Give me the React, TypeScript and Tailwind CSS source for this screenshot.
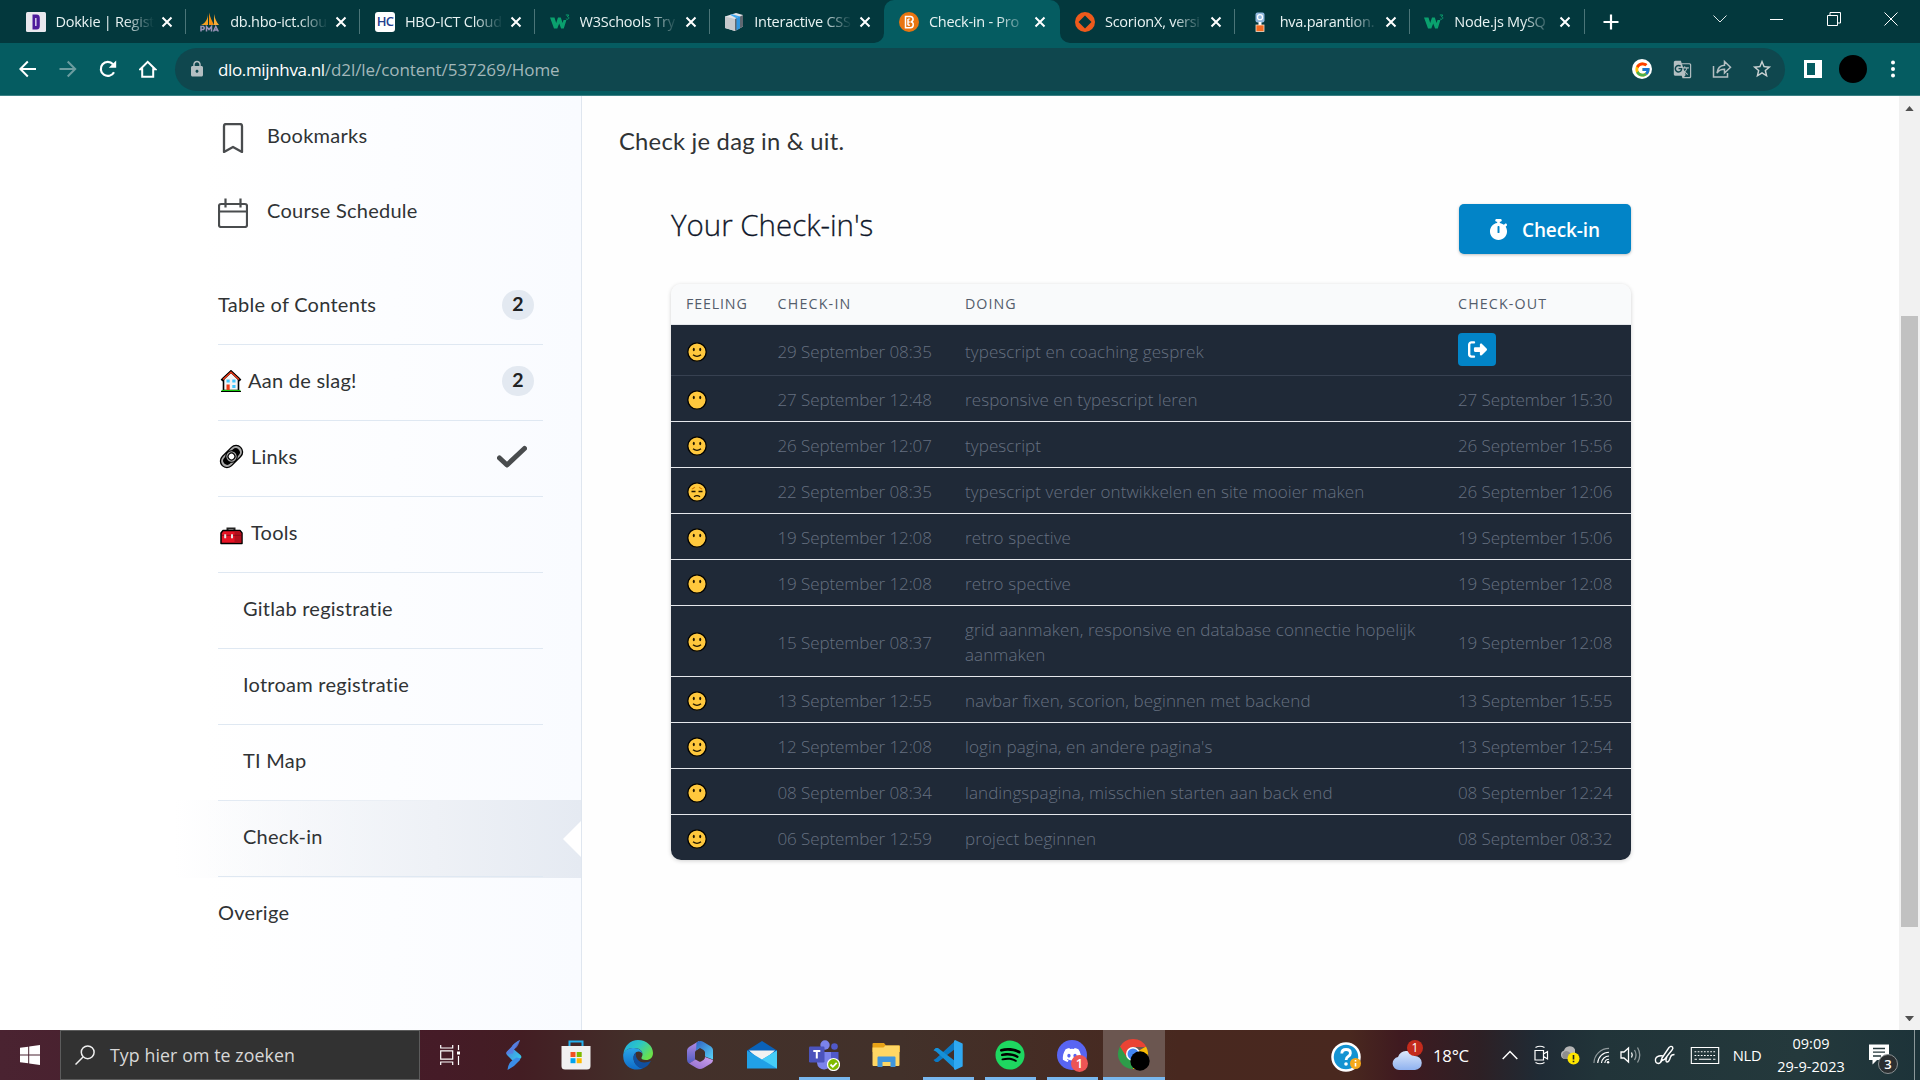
import type { ReactNode } from "react";
import { FaDiscord, FaSpotify } from "react-icons/fa";
import { FaRightFromBracket, FaStopwatch } from "react-icons/fa6";
import { FcGoogle } from "react-icons/fc";
import { MdGTranslate, MdLock, MdStarOutline } from "react-icons/md";

/* ---------- favicons ---------- */

const W3Icon = () => (
  <svg viewBox="0 0 20 20" className="size-5">
    <path d="M0 5.500h4.500l1.700 5.600 1.800-5.600h2.800l1.800 5.600 0.900-3.200h2.900L13.800 16.500h-2.700L9.200 11.500 7.300 16.500H4z" fill="#0aa06e" />
    <path d="M15.800 3h3l-1.400 1.700c1.300.1 1.700 1 1.300 1.800-.5 1-2.100 1-2.800.2" fill="none" stroke="#0aa06e" strokeWidth="1" />
  </svg>
);

const DokkieIcon = () => (
  <svg viewBox="0 0 20 20" className="size-5">
    <rect width="20" height="20" rx="1.500" fill="#e9e8ee" />
    <path d="M6.500 2.500h4c2.600 0 3.300 1.500 3.300 4v7c0 2.500-.7 4-3.300 4h-4z" fill="#4d1b9b" />
    <path d="M9.800 6v8" stroke="#cfc3e6" strokeWidth="1.600" />
  </svg>
);

const PmaIcon = () => (
  <svg viewBox="0 0 20 20" className="size-5">
    <path d="M8 1.500C8 7 5.500 11 1 13h7z" fill="#f5a01f" />
    <path d="M9 0.500v12.500h5C12 9 10 5 9 0.500z" fill="#f28c0f" />
    <path d="M14 2v11h5c-2.500-3-4-6-5-11z" fill="#f7ab35" />
    <path d="M1 19.500v-5h2.500q1.500 1.500 0 3H1M6.500 19.500v-5l2.500 3 2.500-3v5M13.500 19.500l2.300-5 2.500 5M14.500 18h3" fill="none" stroke="#9a93b8" strokeWidth="1.500" />
  </svg>
);

const HcIcon = () => (
  <span className="flex size-5 items-center justify-center rounded-[3px] bg-white text-[13px] font-semibold tracking-[-1px] text-[#25408f]">
    HC
  </span>
);

const CubeIcon = () => (
  <svg viewBox="0 0 20 20" className="size-5">
    <path d="M1 4.500 12 1l7 2v11.500L11 19 1 16z" fill="#e3e5e8" />
    <path d="M1 4.500 11 7v12L1 16z" fill="#c6c9cd" />
    <path d="M11 7l8-4v11.500L11 19z" fill="#5f6770" />
    <path d="M12.500 6.200 16 4.500v11.700l-3.500 2z" fill="#2f95e0" />
    <path d="M6 2.800 8 2.200l8 2.300-3.500 1.700z" fill="#3fa9f0" />
  </svg>
);

const BrightspaceIcon = () => (
  <svg viewBox="0 0 20 20" className="size-5">
    <circle cx="10" cy="10" r="10" fill="#e87511" />
    <path d="M6.500 4.500h4.500a2.700 2.700 0 0 1 1 5.300 3 3 0 0 1-.7 5.900H6.500zM9 7v6.300" fill="none" stroke="#fff" strokeWidth="1.500" />
    <path d="M9 7h2M9 10h2.500M9 13.200h2" stroke="#fff" strokeWidth="1.200" />
  </svg>
);

const ScorionIcon = () => (
  <svg viewBox="0 0 20 20" className="size-5">
    <circle cx="10" cy="10" r="10" fill="#ee5a1c" />
    <path d="M10 3.500 16.500 10 10 16.500 3.500 10z" fill="#03383d" />
  </svg>
);

const ParantionIcon = () => (
  <svg viewBox="0 0 20 20" className="size-5">
    <rect x="5.500" y="0.500" width="9" height="10" rx="2" fill="#8fb7de" />
    <circle cx="10" cy="5.200" r="2.500" fill="none" stroke="#fff" strokeWidth="1.300" />
    <path d="M10 10v3" stroke="#fff" strokeWidth="3" />
    <rect x="6" y="13" width="8" height="6.500" fill="#f26a21" stroke="#f8dcc8" strokeWidth=".8" />
  </svg>
);

/* ---------- browser chrome ---------- */

type TabData = { title: string; icon: ReactNode; active?: boolean; divider?: boolean };

const tabs: TabData[] = [
  { title: "Dokkie | Regist", icon: <DokkieIcon />, divider: true },
  { title: "db.hbo-ict.clou", icon: <PmaIcon />, divider: true },
  { title: "HBO-ICT Cloud", icon: <HcIcon />, divider: true },
  { title: "W3Schools Try", icon: <W3Icon />, divider: true },
  { title: "Interactive CSS", icon: <CubeIcon /> },
  { title: "Check-in - Pro", icon: <BrightspaceIcon />, active: true },
  { title: "ScorionX, versi", icon: <ScorionIcon />, divider: true },
  { title: "hva.parantion.", icon: <ParantionIcon />, divider: true },
  { title: "Node.js MySQ", icon: <W3Icon />, divider: true },
];

const Tab = ({ title, icon, active, divider }: TabData) => (
  <div
    className={
      "relative flex h-[43px] shrink-0 items-center pl-[14.500px] " +
      (active ? "w-[176px] rounded-t-[10px] bg-[#055c61]" : "w-[174.700px]")
    }
  >
    {active && (
      <>
        <svg viewBox="0 0 10 10" className="absolute bottom-0 -left-2.5 size-2.5">
          <path d="M10 0v10H0A10 10 0 0 0 10 0z" fill="#055c61" />
        </svg>
        <svg viewBox="0 0 10 10" className="absolute -right-2.5 bottom-0 size-2.5">
          <path d="M0 0v10h10A10 10 0 0 1 0 0z" fill="#055c61" />
        </svg>
      </>
    )}
    {icon}
    <span className="ml-[10px] w-[98px] [mask-image:linear-gradient(to_right,black_70%,transparent)] text-[14.500px] tracking-[-0.250px] whitespace-nowrap text-[#e9f3f3]">
      {title}
    </span>
    <svg viewBox="0 0 10 10" className="ml-[8px] size-[10px] overflow-visible">
      <path d="M0.500 0.500l9 9M9.500 0.500l-9 9" stroke="#fff" strokeWidth="2" />
    </svg>
    {divider && <span className="ml-auto h-[25px] w-px bg-[#4b7578]" />}
  </div>
);

const TabStrip = () => (
  <div className="flex h-[43px] bg-[#03383d] pl-[11px]">
    {tabs.map((t) => (
      <Tab key={t.title} {...t} />
    ))}
    <div className="flex w-[53px] items-center justify-center">
      <svg viewBox="0 0 16 16" className="size-4">
        <path d="M8 0.500v15M0.500 8h15" stroke="#fff" strokeWidth="2.200" />
      </svg>
    </div>
    <div className="ml-auto flex h-[38px] items-center">
      <div className="flex w-[57px] justify-center">
        <svg viewBox="0 0 14 8" className="w-3.5">
          <path d="M0.500 0.500 7 7l6.500-6.500" fill="none" stroke="#dfe8e8" />
        </svg>
      </div>
      <div className="flex w-[57px] justify-center">
        <span className="h-px w-[13px] bg-white" />
      </div>
      <div className="flex w-[57px] justify-center">
        <svg viewBox="0 0 14 14" className="size-3.5">
          <path d="M0.500 3.500h10v10h-10zM3 3.500v-3h10.500v10.500H10.500" fill="none" stroke="#fff" />
        </svg>
      </div>
      <div className="flex w-[58px] justify-center">
        <svg viewBox="0 0 14 14" className="size-3.5">
          <path d="M0.500 0.500l13 13M13.500 0.500l-13 13" stroke="#fff" />
        </svg>
      </div>
    </div>
  </div>
);

const NavButton = ({ children }: { children: ReactNode }) => (
  <div className="flex w-10 justify-center">{children}</div>
);

const Toolbar = () => (
  <div className="flex h-[53px] items-center border-b border-[#3a8084] bg-[#055c61] pl-2">
    <NavButton>
      <svg viewBox="0 0 18 18" className="size-[18px]" fill="none" stroke="#fff" strokeWidth="2">
        <path d="M17 9H1.500M8.800 1.500 1.300 9l7.500 7.500" />
      </svg>
    </NavButton>
    <NavButton>
      <svg viewBox="0 0 18 18" className="size-[18px]" fill="none" stroke="#6c9da0" strokeWidth="2">
        <path d="M0.500 9H16M8.700 1.500 16.200 9l-7.500 7.500" />
      </svg>
    </NavButton>
    <NavButton>
      <svg viewBox="0 0 18 18" className="size-[18px]">
        <path d="M15 12.200A7 7 0 1 1 14 4.200" fill="none" stroke="#fff" strokeWidth="2.200" />
        <path d="M17.200 0.500v7.300H9.800z" fill="#fff" />
      </svg>
    </NavButton>
    <NavButton>
      <svg viewBox="0 0 18 18" className="size-[18px]">
        <path d="M1.300 9.200 8.700 1.800l7.500 7.400h-2v7.600h-11V9.200z" fill="none" stroke="#fff" strokeWidth="2" />
      </svg>
    </NavButton>
    <div className="ml-[7px] flex h-[43px] w-[1610px] items-center rounded-full bg-[#0f474e] pl-[13px]">
      <MdLock className="size-[18px] text-[#b4bfc2]" />
      <div className="mt-0.5 ml-[12px] text-[17px] whitespace-nowrap text-[#a3b7ba]">
        <span className="tracking-[-0.350px] text-white">dlo.mijnhva.nl</span>
        <span className="tracking-[-0.070px]">/d2l/le/content/537269/Home</span>
      </div>
      <div className="ml-auto flex items-center pr-[3px]">
        <NavButton>
          <span className="flex size-5 items-center justify-center rounded-full bg-white">
            <FcGoogle className="size-[17px]" />
          </span>
        </NavButton>
        <NavButton>
          <MdGTranslate className="size-[19px] text-[#b4bfc2]" />
        </NavButton>
        <NavButton>
          <svg viewBox="0 0 20 20" className="size-5" fill="none" stroke="#b4bfc2" strokeWidth="1.500">
            <path d="M1.500 7v11h14v-4M12.500 2.500v3.700C7.500 6.500 5.500 9.500 5 14c2-3 4.500-3.800 7.500-3.700V14l6-5.800z" />
          </svg>
        </NavButton>
        <NavButton>
          <MdStarOutline className="size-[22px] text-[#c9d1d2]" />
        </NavButton>
      </div>
    </div>
    <div className="ml-[8px] flex items-center">
      <NavButton>
        <span className="flex h-[18px] w-[18px] border-[3px] border-r-[7px] border-white" />
      </NavButton>
      <NavButton>
        <span className="size-[28px] rounded-full bg-black" />
      </NavButton>
      <NavButton>
        <svg viewBox="0 0 4 18" className="h-[18px]" fill="#fff">
          <circle cx="2" cy="2.500" r="2" />
          <circle cx="2" cy="9" r="2" />
          <circle cx="2" cy="15.500" r="2" />
        </svg>
      </NavButton>
    </div>
  </div>
);

/* ---------- sidebar ---------- */

const HouseIcon = () => (
  <svg viewBox="0 0 22 22" className="size-[22px]">
    <path d="M3.500 8v12.500h15V8L11 1.500z" fill="#f4f4f4" stroke="#000" strokeWidth="1.600" />
    <path d="M1.500 10.500 11 1.500l9.500 9" fill="none" stroke="#000" strokeWidth="2.500" />
    <path d="M3 9.500 11 2.200l8 7.300" fill="none" stroke="#f03a17" strokeWidth="1.500" />
    <path d="M6.500 9.500h3.200v3H6.500zM12.300 9.500h3.200v3h-3.200zM12.300 15h3.200v3h-3.200z" fill="#3fc8ff" />
    <path d="M6.500 14.500h3.200V20H6.500z" fill="#f03a17" />
    <path d="M1.500 20.500h19" stroke="#16c60c" strokeWidth="1.200" />
    <path d="M1 21.500h20" stroke="#000" strokeWidth="1" />
  </svg>
);

const LinkIcon = () => (
  <svg viewBox="0 0 24 24" className="size-[23px] overflow-visible" fill="none">
    <g transform="rotate(-45 12 12)">
      <rect x="-1.500" y="5.200" width="27" height="13.600" rx="6.800" fill="#a9a9a9" stroke="#000" strokeWidth="1.400" />
      <rect x="1.500" y="7.700" width="21" height="8.600" rx="4.300" fill="#000" />
      <rect x="6" y="6" width="12" height="12" rx="6" fill="#a9a9a9" stroke="#000" strokeWidth="1.200" />
      <circle cx="12" cy="12" r="3.500" fill="#fff" stroke="#000" strokeWidth="1.300" />
    </g>
  </svg>
);

const ToolboxIcon = () => (
  <svg viewBox="0 0 23 18" className="h-[18px] w-[23px]">
    <path d="M7.500 4V1.500h7V4" fill="none" stroke="#222" strokeWidth="2" />
    <path d="M1 6 3 3.500h17L22 6v10.500H1z" fill="#e81224" stroke="#000" strokeWidth="1.500" strokeLinejoin="round" />
    <path d="M14.500 4.500H20l1.300 2v9.300h-6.800z" fill="#b40f1c" />
    <path d="M2 8.300h19" stroke="#7d0a14" strokeWidth=".8" />
    <path d="M4.200 7.300h2v4h-2zM11 7.300h2v4h-2z" fill="#e6e6e6" />
  </svg>
);

const Badge = () => (
  <span className="mr-[9px] ml-auto flex h-[30px] w-8 items-center justify-center rounded-full bg-[#e3e9f1] pb-0.5 text-[19.500px] font-bold text-[#202122]">
    2
  </span>
);

const CheckMark = () => (
  <svg viewBox="0 0 30 24" className="mr-4 ml-auto h-6 w-[30px]">
    <path d="M2.500 13 10 20 27.500 3.500" fill="none" stroke="#494c4e" strokeWidth="5" strokeLinecap="round" strokeLinejoin="round" />
  </svg>
);

type SideRow = { label: string; icon?: ReactNode; end?: ReactNode; nested?: boolean; selected?: boolean; last?: boolean };

const sideRows: SideRow[] = [
  { label: "Table of Contents", end: <Badge /> },
  { label: "Aan de slag!", icon: <span className="mr-[6px] ml-[2px]"><HouseIcon /></span>, end: <Badge /> },
  { label: "Links", icon: <span className="mr-[8px] ml-[2px]"><LinkIcon /></span>, end: <CheckMark /> },
  { label: "Tools", icon: <span className="mt-[6px] mr-[8px] ml-[2px]"><ToolboxIcon /></span> },
  { label: "Gitlab registratie", nested: true },
  { label: "Iotroam registratie", nested: true },
  { label: "TI Map", nested: true },
  { label: "Check-in", nested: true, selected: true },
  { label: "Overige", last: true },
];

const Sidebar = () => (
  <aside className="w-[582px] shrink-0 overflow-hidden border-r border-[#dfe6ef] bg-linear-to-r from-white from-35% to-[#f9fbff] text-[20px] tracking-[0.250px] text-[#303335]">
    <div className="flex h-[75px] items-center pt-[9px] pl-[218px]">
      <svg viewBox="0 0 30 30" className="size-[30px]">
        <path d="M8 1h14a2 2 0 0 1 2 2v26l-9-5-9 5V3a2 2 0 0 1 2-2z" fill="none" stroke="#494c4e" strokeWidth="2.300" strokeLinejoin="round" />
      </svg>
      <span className="-mt-[7px] ml-[19px]">Bookmarks</span>
    </div>
    <div className="flex h-[75px] items-center pt-[9px] pl-[218px]">
      <svg viewBox="0 0 30 30" className="size-[30px]" fill="none" stroke="#494c4e" strokeWidth="2.200">
        <rect x="1" y="6" width="28" height="23" rx="2" />
        <path d="M1 13.500h28M7.500 0.500v9M22.500 0.500v9" />
      </svg>
      <span className="-mt-[7px] ml-[19px]">Course Schedule</span>
    </div>
    <div className="mt-[23px]">
      {sideRows.map((r) => (
        <div
          key={r.label}
          className={
            "relative flex pl-[218px] " +
            (r.selected
              ? "-mt-px -mb-px h-[78px] bg-linear-to-r from-transparent from-30% via-[#eef1f6] via-75% to-[#e5eaf2] pt-px pb-px"
              : "h-[76px]")
          }
        >
          <div
            className={
              "flex w-[325px] items-center " +
              (r.last ? "pb-[6px] " : "border-b border-[#dfe8f2] pb-[4px] ") +
              (r.nested ? "pl-[25px]" : "")
            }
          >
            {r.icon}
            <span className="-mt-px">{r.label}</span>
            {r.end}
          </div>
          {r.selected && (
            <svg viewBox="0 0 18 36" className="absolute top-[21px] right-0 h-9 w-[18px]">
              <path d="M18 0v36L0 18z" fill="#fff" />
            </svg>
          )}
        </div>
      ))}
    </div>
  </aside>
);

/* ---------- check-in table ---------- */

type Mood = "smile" | "neutral" | "sad";

const Face = ({ mood }: { mood: Mood }) => (
  <svg viewBox="0 0 20 20" className="ml-px size-5">
    <circle cx="10" cy="10" r="9.200" fill="#ffc83d" stroke="#000" strokeWidth="1.300" />
    {mood === "sad" ? (
      <>
        <path d="M4.500 9.500h4M11.500 9.500h4" stroke="#1f1500" strokeWidth="1.300" />
        <path d="M4.800 7q2-.5 3-2M15.200 7q-2-.5-3-2" fill="none" stroke="#d67d00" strokeWidth="1.200" />
        <path d="M7 14.800q3-2.300 6 0" fill="none" stroke="#1f1500" strokeWidth="1.300" />
      </>
    ) : (
      <>
        <ellipse cx="6.800" cy="7.500" rx="1" ry="1.700" fill="#1f1500" />
        <ellipse cx="13.200" cy="7.500" rx="1" ry="1.700" fill="#1f1500" />
      </>
    )}
    {mood === "smile" && <path d="M6 12.700q4 3.300 8 0" fill="none" stroke="#1f1500" strokeWidth="1.400" />}
  </svg>
);

type Entry = { mood: Mood; start: string; doing: string; end?: string; tall?: boolean };

const entries: Entry[] = [
  { mood: "smile", start: "29 September 08:35", doing: "typescript en coaching gesprek" },
  { mood: "neutral", start: "27 September 12:48", doing: "responsive en typescript leren", end: "27 September 15:30" },
  { mood: "smile", start: "26 September 12:07", doing: "typescript", end: "26 September 15:56" },
  { mood: "sad", start: "22 September 08:35", doing: "typescript verder ontwikkelen en site mooier maken", end: "26 September 12:06" },
  { mood: "neutral", start: "19 September 12:08", doing: "retro spective", end: "19 September 15:06" },
  { mood: "neutral", start: "19 September 12:08", doing: "retro spective", end: "19 September 12:08" },
  { mood: "smile", start: "15 September 08:37", doing: "grid aanmaken, responsive en database connectie hopelijk aanmaken", end: "19 September 12:08", tall: true },
  { mood: "smile", start: "13 September 12:55", doing: "navbar fixen, scorion, beginnen met backend", end: "13 September 15:55" },
  { mood: "smile", start: "12 September 12:08", doing: "login pagina, en andere pagina's", end: "13 September 12:54" },
  { mood: "neutral", start: "08 September 08:34", doing: "landingspagina, misschien starten aan back end", end: "08 September 12:24" },
  { mood: "smile", start: "06 September 12:59", doing: "project beginnen", end: "08 September 08:32" },
];

const rowLook = (i: number, e: Entry) => {
  if (i === 0) return "h-[51px] border-b border-[#374151] pt-[3px]";
  if (i === entries.length - 1) return "h-[45px] pt-[2px]";
  if (e.tall) return "h-[71px] border-b border-[#e5e7eb] pt-[2px]";
  return "h-[46px] border-b border-[#e5e7eb] pt-[2px]";
};

const CheckInTable = () => (
  <div className="mt-[30px] w-[960px] overflow-hidden rounded-[10px] font-['Open_Sans',sans-serif] shadow-[0_1px_4px_rgba(0,0,0,0.18)]">
    <div className="grid h-[41px] grid-cols-[91.500px_187.500px_493px_1fr] items-center border-b border-[#e5e7eb] bg-[#f9fafb] pl-[15px] text-[14.250px] text-[#545d6b]">
      <span className="tracking-[0.850px]">FEELING</span>
      <span className="tracking-[1.200px]">CHECK-IN</span>
      <span className="tracking-[1.000px]">DOING</span>
      <span className="tracking-[1.150px]">CHECK-OUT</span>
    </div>
    <div className="bg-[#1f2937] text-[17px] leading-[25px] font-light text-[#667080]">
      {entries.map((e, i) => (
        <div key={i} className={"grid grid-cols-[91.500px_187.500px_493px_1fr] items-center pl-[15px] " + rowLook(i, e)}>
          <Face mood={e.mood} />
          <span className="tracking-[-0.090px]">{e.start}</span>
          <span className="w-[462px] tracking-[0.090px]">{e.doing}</span>
          {e.end ? (
            <span className="tracking-[-0.090px]">{e.end}</span>
          ) : (
            <span className="-mt-[5px] flex h-[33px] w-[38px] items-center justify-center rounded-[4px] bg-[#0284c7]">
              <FaRightFromBracket className="size-[19px] text-white" />
            </span>
          )}
        </div>
      ))}
    </div>
  </div>
);

const Content = () => (
  <main className="flex-1 bg-[#fefefe] pl-[37px]">
    <div className="pt-[28px] text-[23.750px] leading-[34px] tracking-[0.240px] text-[#303335]">Check je dag in &amp; uit.</div>
    <div className="mt-[46px] ml-[52px] flex w-[960px] items-start font-['Open_Sans',sans-serif]">
      <h1 className="mt-[3px] text-[29.500px] leading-[36px] font-light tracking-[-0.020px] text-[#0f172a] [-webkit-text-stroke:0.3px_#0f172a]">
        Your Check-in's
      </h1>
      <button className="ml-auto flex h-[50px] w-[172px] items-center rounded-[5px] bg-[#0284c7] pl-[29px] shadow-[0_1px_3px_rgba(0,0,0,0.25)]">
        <FaStopwatch className="size-[21px] text-white" />
        <span className="ml-[13px] pt-[2px] text-[19px] font-semibold tracking-[-0.120px] text-white">Check-in</span>
      </button>
    </div>
    <div className="ml-[52px]">
      <CheckInTable />
    </div>
  </main>
);

const Scrollbar = () => (
  <div className="flex w-[21px] shrink-0 flex-col items-center justify-between bg-[#f1f1f1] py-[9px]">
    <svg viewBox="0 0 10 6" className="mt-[1px] w-[9px]">
      <path d="M0 6 5 0l5 6z" fill="#505050" />
    </svg>
    <div className="mt-[205px] mb-auto h-[611px] w-[17px] bg-[#c1c1c1]" />
    <svg viewBox="0 0 10 6" className="w-[9px]">
      <path d="M0 0l5 6 5-6z" fill="#505050" />
    </svg>
  </div>
);

/* ---------- taskbar ---------- */

const TaskViewIcon = () => (
  <svg viewBox="0 0 20 20" className="mr-[4px] size-5" fill="none" stroke="#fff" strokeWidth="1.200">
    <path d="M0.700 0v3h12V0M0.700 5.800h12v8.400h-12zM0.700 20v-3h12v3M18.500 0v5M18.500 11v9" />
    <path d="M17 6.500h3v3h-3z" fill="#fff" stroke="none" />
  </svg>
);

const StreamIcon = () => (
  <svg viewBox="0 0 30 30" className="size-[30px]">
    <defs>
      <linearGradient id="sa" x1="0" y1="0" x2="1" y2="1">
        <stop offset="0" stopColor="#4b72e0" />
        <stop offset="1" stopColor="#35d0e8" />
      </linearGradient>
    </defs>
    <path d="M21 0C17 1.500 14 4.500 12.500 7L8 11.500q-1.500 1.800 0 3.500l7 7 6.500-3.500q1.800-1.500 0-3.500L15 9.500z" fill="url(#sa)" />
    <path d="M21 0c-1.500 5-2.500 7-6 9.500l-1 4L8 14q-1.300-1 0-2.500L12.500 7C14 4.500 17 1.500 21 0z" fill="#5a78e0" opacity=".8" />
    <path d="M8.500 30c.5-3.500 1-6 3.500-8.500l2.500-2 3-2 4 1q-.5 2-2.500 3.500l-4 4z" fill="#3b8de8" />
  </svg>
);

const StoreIcon = () => (
  <svg viewBox="0 0 30 30" className="size-[30px]">
    <path d="M8.500 6.500V1.500h13v5" fill="none" stroke="#23b1f0" strokeWidth="2" />
    <path d="M0.500 6h29v20a3.500 3.500 0 0 1-3.500 3.500H4A3.500 3.500 0 0 1 0.500 26z" fill="#f1f1f1" />
    <path d="M9.500 12h5v5h-5z" fill="#f25022" />
    <path d="M15.700 12h5v5h-5z" fill="#7fba00" />
    <path d="M9.500 18.200h5v5h-5z" fill="#00a4ef" />
    <path d="M15.700 18.200h5v5h-5z" fill="#ffb900" />
  </svg>
);

const EdgeIcon = () => (
  <svg viewBox="0 0 30 30" className="size-[30px]">
    <defs>
      <linearGradient id="ea" x1="0" y1="0" x2="1" y2=".6">
        <stop offset="0" stopColor="#1fa7e6" />
        <stop offset=".5" stopColor="#2cc7c4" />
        <stop offset="1" stopColor="#6be04a" />
      </linearGradient>
      <linearGradient id="eb" x1="0" y1="0" x2="0" y2="1">
        <stop offset="0" stopColor="#2aa5e8" />
        <stop offset="1" stopColor="#0f6cc8" />
      </linearGradient>
    </defs>
    <path d="M0.500 14C1 6 7.500 0 15 0c8.500 0 15 6 15 13 0 4.500-3 7-7 7-3.500 0-5-1.200-4.500-2.500.5-1.200 1-1.700 1-3.500 0-3-3-6-8.500-6C6 8 2 10 0.500 14z" fill="url(#ea)" />
    <path d="M0.300 14C2 9.500 7 8 11 8c5 0 8.500 3 8.500 6-.5-1.500-2-2.500-4-2.500-3 0-5 3-5 6.500 0 5 4 9.500 9.500 10.500C11 32-1 27 0.300 14z" fill="url(#eb)" />
    <path d="M10.500 18c0-2 .8-4 2.500-5.500-1 5.500 2.500 10 8.500 10 2.500 0 4.500-.7 6.500-1.700C26 25 22.500 27.800 19.500 28.500 14 27.500 10.500 23 10.500 18z" fill="#1050a0" />
  </svg>
);

const OfficeIcon = () => (
  <svg viewBox="0 0 26 30" className="h-[30px] w-[26px]">
    <defs>
      <linearGradient id="oa" x1="0" y1="0" x2="0" y2="1">
        <stop offset="0" stopColor="#b58be6" />
        <stop offset="1" stopColor="#4f5cc0" />
      </linearGradient>
      <linearGradient id="ob" x1="0" y1="0" x2="1" y2="1">
        <stop offset="0" stopColor="#2f62c4" />
        <stop offset="1" stopColor="#58d4f7" />
      </linearGradient>
      <linearGradient id="oc" x1="0" y1="1" x2="1" y2="0">
        <stop offset="0" stopColor="#8f6bcb" />
        <stop offset="1" stopColor="#cfa3ef" />
      </linearGradient>
    </defs>
    <path d="M12 1 2 7Q0 8.500 0 10.500v9Q0 22 2 23.500l6-3.500V12.500Q8 11 9.500 10L12 8.500z" fill="url(#oa)" />
    <path d="M9.500 2.500Q13 0 16.500 2L24 6.500q2 1.500 2 3.500v9.500l-8-3v-4Q18 11 16.500 10L13 8 9 10.500z" fill="url(#ob)" />
    <path d="M2 23.500 8.500 19.500 12 21.500q1 .5 2 0l2.500-1.500q1.500-1 1.500-3l8 3q0 2-2 3.500l-7.500 4.500q-3.500 2-7 0z" fill="url(#oc)" />
  </svg>
);

const MailIcon = () => (
  <svg viewBox="0 0 30 28" className="h-7 w-[30px]">
    <path d="M0 9.500 15 0l15 9.500v6H0z" fill="#0a62b8" />
    <path d="M2 9.500h26L15 21z" fill="#f2f2f2" />
    <path d="M0 9.500 15 18.500 30 9.500V27.500H0z" fill="#21a0e6" />
    <path d="M30 9.500 15 18.500l15 9z" fill="#46cdf8" />
  </svg>
);

const TeamsIcon = () => (
  <svg viewBox="0 0 32 32" className="size-8">
    <circle cx="17" cy="6" r="4.700" fill="#7b83eb" />
    <circle cx="26.500" cy="7.500" r="3.300" fill="#5059c9" />
    <path d="M22 13h8.500v9a5 5 0 0 1-8.500 3z" fill="#5059c9" />
    <path d="M9 13h14v10a7 7 0 0 1-14 1z" fill="#7b83eb" />
    <rect x="1" y="7.500" width="15.500" height="16" rx="1.200" fill="#4b53bc" />
    <path d="M5.300 12h7M8.800 12v7.500" stroke="#fff" strokeWidth="2" />
    <circle cx="25.500" cy="25.500" r="6" fill="#7fba00" stroke="#fff" strokeWidth="1.200" />
    <path d="M22.500 25.500l2.300 2.300 3.900-4" fill="none" stroke="#fff" strokeWidth="1.800" />
  </svg>
);

const ExplorerIcon = () => (
  <svg viewBox="0 0 28 26" className="h-[26px] w-7">
    <path d="M0.500 2a1 1 0 0 1 1-1H12l2 2.500H27a1 1 0 0 1 1 1V10H0.500z" fill="#e8a317" />
    <path d="M0.500 5.500h11l2-2H27.500V23a1 1 0 0 1-1 1h-25a1 1 0 0 1-1-1z" fill="#ffd764" />
    <path d="M5.500 25V15.500a1 1 0 0 1 1-1h16a1 1 0 0 1 1 1V25h-5v-5h-8v5z" fill="#3f96dd" />
  </svg>
);

const CodeIcon = () => (
  <svg viewBox="0 0 30 30" className="size-[30px]">
    <path d="M22 1 3 18.500 0.500 20 2.700 22 5 22 22 9z" fill="#0b79c4" />
    <path d="M22 29 3 11.500 0.500 10.200 2.700 8 5 8l17 13z" fill="#1690d8" />
    <path d="M22 0l7 3.300a1 1 0 0 1 .7 1v21.400a1 1 0 0 1-.7 1L22 30l-1-1V1z" fill="#2fa9f2" />
  </svg>
);

const ChromeIcon = () => (
  <svg viewBox="0 0 34 34" className="size-[34px]">
    <path d="M16 16 29 8.500A15 15 0 0 1 16 31z" fill="#fbbc05" />
    <path d="M16 16v15A15 15 0 0 1 3 8.500z" fill="#2d9c49" />
    <path d="M16 9h13.300A15 15 0 0 0 3 8.500l6.900 11z" fill="#ea4335" />
    <circle cx="16" cy="16" r="7" fill="#fff" />
    <circle cx="16" cy="16" r="5.500" fill="#4285f4" />
    <circle cx="23" cy="23" r="9.700" fill="#000" />
  </svg>
);

const DiscordIcon = () => (
  <span className="relative flex size-[30px] items-center justify-center rounded-full bg-[#5865f2]">
    <FaDiscord className="size-5 text-white" />
    <span className="absolute -right-[1px] -bottom-[2px] flex size-[17px] items-center justify-center rounded-full bg-[#ed5555] text-[13px] leading-none font-semibold text-white">
      1
    </span>
  </span>
);

const SpotifyIcon = () => (
  <span className="flex size-[28px] items-center justify-center rounded-full bg-black">
    <FaSpotify className="size-[30px] shrink-0 text-[#1ed760]" />
  </span>
);

type App = { name: string; icon: ReactNode; open?: boolean; active?: boolean };

const apps: App[] = [
  { name: "taskview", icon: <TaskViewIcon /> },
  { name: "stream", icon: <StreamIcon /> },
  { name: "store", icon: <StoreIcon /> },
  { name: "edge", icon: <EdgeIcon /> },
  { name: "office", icon: <OfficeIcon /> },
  { name: "mail", icon: <MailIcon /> },
  { name: "teams", icon: <TeamsIcon />, open: true },
  { name: "explorer", icon: <ExplorerIcon /> },
  { name: "code", icon: <CodeIcon />, open: true },
  { name: "spotify", icon: <SpotifyIcon />, open: true },
  { name: "discord", icon: <DiscordIcon />, open: true },
  { name: "chrome", icon: <ChromeIcon />, open: true, active: true },
];

const Taskbar = () => (
  <footer className="flex h-[50px] items-stretch bg-[linear-gradient(90deg,#4a2331_0px,#451b27_440px,#431d23_520px,#43302a_640px,#42312a_900px,#48281f_1180px,#49281f_1350px,#3f1a20_1400px,#2d2025_1480px,#1f2b35_1540px,#213439_1600px,#24393c_1800px,#1d3339_1920px)] font-['Open_Sans',sans-serif] text-white">
    <div className="flex w-[60px] items-center justify-center">
      <svg viewBox="0 0 20 20" className="size-5" fill="#fff">
        <path d="M0 2.800 8.200 1.700v7.800H0zM9.200 1.500 20 0v9.500H9.200zM0 10.500h8.200v7.800L0 17.200zM9.200 10.500H20V20L9.200 18.500z" />
      </svg>
    </div>
    <div className="flex w-[360px] items-center border border-[#5c5c5c] bg-[#323232] pl-[14px]">
      <svg viewBox="0 0 20 20" className="size-5" fill="none" stroke="#f0f0f0" strokeWidth="1.500">
        <circle cx="12.700" cy="7.300" r="6.400" />
        <path d="M8 12 0.500 19.500" />
      </svg>
      <span className="ml-[15px] pt-px text-[17.750px] tracking-[0.090px] text-[#d8d8d8]">Typ hier om te zoeken</span>
    </div>
    <div className="ml-px flex">
      {apps.map((a) => (
        <div
          key={a.name}
          className={
            "flex w-[62px] flex-col items-center " + (a.active ? "bg-[#6b5650]" : "")
          }
        >
          <div className="flex h-[47px] items-center pt-[3px]">{a.icon}</div>
          {a.open && <div className={a.active ? "h-[3px] w-full bg-[#78b7ee]" : "h-[3px] w-[51px] bg-[#78b7ee]"} />}
        </div>
      ))}
    </div>
    <div className="ml-auto flex items-center">
      <div className="flex w-[61px] justify-center pt-1 pl-[2px]">
        <svg viewBox="0 0 30 30" className="size-[30px]">
          <circle cx="15" cy="15" r="13.500" fill="#1493d2" stroke="#fff" strokeWidth="2.500" />
          <path d="M10.800 11.500q0-4 4.300-4t4.300 3.700q0 2-2.200 3.300t-2.100 3.500" fill="none" stroke="#fff" strokeWidth="2.800" />
          <circle cx="15" cy="22" r="1.800" fill="#fff" />
          <circle cx="24.500" cy="21.500" r="5.500" fill="#f5a81c" />
          <path d="M24.500 21v3.500M24.500 18v1.600" stroke="#fff" strokeWidth="1.600" />
        </svg>
      </div>
      <div className="flex w-[114px] items-center pl-[17px]">
        <div className="relative">
          <svg viewBox="0 0 30 22" className="mt-2 h-[22px] w-[30px]">
            <defs>
              <linearGradient id="cl" x1="0" y1="0" x2="0" y2="1">
                <stop offset="0" stopColor="#dce8fb" />
                <stop offset="1" stopColor="#8fb2ef" />
              </linearGradient>
            </defs>
            <path d="M7 22a6.500 6.500 0 0 1-1-12.900A9 9 0 0 1 22.500 8 7 7 0 1 1 23 22z" fill="url(#cl)" />
          </svg>
          <span className="absolute top-0 right-[-1px] flex size-4 items-center justify-center rounded-full bg-[#c42b1c] text-[12px] leading-none">
            1
          </span>
        </div>
        <span className="ml-[11px] pt-px text-[16.750px] tracking-[-0.250px]">18°C</span>
      </div>
      <div className="flex w-[39px] justify-center pl-[2px]">
        <svg viewBox="0 0 16 10" className="w-4" fill="none" stroke="#fff" strokeWidth="1.500">
          <path d="M0.700 9 8 1.500 15.300 9" />
        </svg>
      </div>
      <div className="flex w-[24px] justify-center pl-px">
        <svg viewBox="0 0 16 20" className="h-5 w-4" fill="none" stroke="#fff" strokeWidth="1.200">
          <path d="M2 5.500h8.500v9.500H2zM10.500 9l4-2.500v7.500l-4-2.500M2.500 2.500Q7 0 11.500 2.500M2.500 17.500Q7 20 11.500 17.500" />
        </svg>
      </div>
      <div className="flex w-[35px] justify-center">
        <svg viewBox="0 0 22 20" className="h-5 w-[22px]">
          <path d="M5 14a4.500 4.500 0 0 1 0-8.500A6 6 0 0 1 16 4.500V14z" fill="#b5b5b5" />
          <path d="M5 14a4.500 4.500 0 0 1 2-8q5 0 7 8z" fill="#8e8e8e" />
          <circle cx="14.500" cy="13.500" r="6" fill="#ffe600" />
          <path d="M14.500 10v4.500M14.500 15.700v1.600" stroke="#222" strokeWidth="1.600" />
        </svg>
      </div>
      <div className="flex w-[28px] justify-center">
        <svg viewBox="0 0 18 18" className="size-[17px]" fill="none" stroke="#fff" strokeWidth="1.200">
          <path d="M1 17A16 16 0 0 1 17 1.500" opacity=".5" />
          <path d="M5 17A12 12 0 0 1 17 5.500M9 17a8 8 0 0 1 8-7.500" />
          <path d="M12.500 17a4.500 4.500 0 0 1 4.500-4" />
          <circle cx="16" cy="16.200" r="1.300" fill="#fff" stroke="none" />
        </svg>
      </div>
      <div className="flex w-[33px] justify-center pr-[2px]">
        <svg viewBox="0 0 22 18" className="h-[18px] w-[22px]" fill="none" stroke="#fff" strokeWidth="1.300">
          <path d="M1 6v6h3l4.500 4V2L4 6zM11.500 6.500q1.500 2.500 0 5" />
          <path d="M14.500 4q3 5 0 10M17.500 1.500q4.500 7.500 0 15" opacity=".5" />
        </svg>
      </div>
      <div className="flex w-[34px] justify-center">
        <svg viewBox="0 0 22 20" className="h-5 w-[22px]" fill="none" stroke="#fff" strokeWidth="1.400">
          <path d="M8 13 15 2.500Q17 0.500 18.500 2 19.500 3.500 18 5L10.500 14.500 7 16zM9.500 11Q3 10 1.500 14 1 18.500 4.500 18.500 7 18 8.500 14M13 11.500q-2 5 0 5.500 2 0 3.500-5 .5-2.500 4-2.500" />
        </svg>
      </div>
      <div className="flex w-[48px] justify-center pr-[2px]">
        <svg viewBox="0 0 30 20" className="h-[19px] w-[30px]" fill="none" stroke="#fff" strokeWidth="1.200">
          <path d="M0.600 1.600h28.800v16.800H0.600z" />
          <path d="M4 6h22M4 10h22" strokeDasharray="1.800 1.500" />
          <path d="M4 14h2.500M8.500 14h13M23.500 14H26" />
        </svg>
      </div>
      <span className="w-[34px] text-center text-[14.750px] tracking-[-0.300px]">NLD</span>
      <div className="ml-[10px] flex w-[74px] flex-col items-center text-[14.500px] leading-[23px] tracking-[0.030px]">
        <span>09:09</span>
        <span>29-9-2023</span>
      </div>
      <div className="relative ml-[21px] w-[45px]">
        <svg viewBox="0 0 20 22" className="h-[22px] w-5">
          <path d="M0 0.500h20v15.500H8l-4.500 4.500V16H0z" fill="#fff" />
          <path d="M4 4.500h12M4 8.200h12M4 12h8" stroke="#26383c" strokeWidth="1.300" />
        </svg>
        <span className="absolute top-[10px] left-[9px] flex size-5 items-center justify-center rounded-full border border-[#8b9193] bg-[#2b2f31] text-[13px] leading-none font-semibold">
          3
        </span>
      </div>
      <span className="mr-[5px] h-[50px] w-px bg-[#8b9799]" />
    </div>
  </footer>
);

export default function App() {
  return (
    <div className="flex h-[1080px] w-[1920px] flex-col overflow-hidden bg-white font-['Lato',sans-serif]">
      <header className="font-['Open_Sans',sans-serif]">
        <TabStrip />
        <Toolbar />
      </header>
      <div className="flex h-[934px]">
        <Sidebar />
        <Content />
        <Scrollbar />
      </div>
      <Taskbar />
    </div>
  );
}
